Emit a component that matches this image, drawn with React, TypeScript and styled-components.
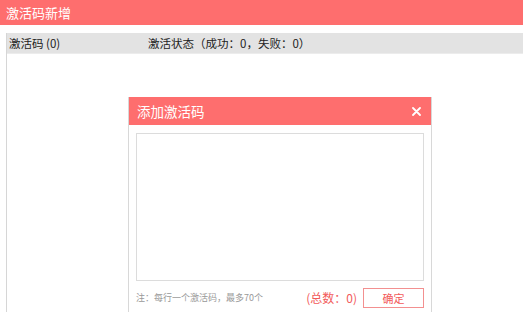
import styled, { createGlobalStyle } from 'styled-components';

const GlobalStyle = createGlobalStyle`
  html, body {
    margin: 0;
    padding: 0;
    background: #fff;
    font-family: "Noto Sans CJK SC", "Noto Sans", sans-serif;
  }
`;

const Page = styled.div`
  position: relative;
  width: 523px;
  height: 312px;
  overflow: hidden;
`;

const TopBar = styled.div`
  height: 25px;
  background: #fe6e6e;
  color: #fff;
  font-size: 13px;
  line-height: 25px;
  padding-left: 6px;
`;

const Table = styled.div`
  margin-top: 8px;
  margin-left: 6px;
  border-left: 1px solid #d6d6d6;
  height: 300px;
`;

const HeadRow = styled.div`
  display: flex;
  height: 20px;
  background: #e3e3e3;
  border-bottom: 1px solid #ececec;
  font-size: 11.5px;
  color: #222;
  line-height: 20px;
`;

const HeadCell = styled.div<{ $w?: number }>`
  width: ${(p) => (p.$w ? `${p.$w}px` : 'auto')};
  flex: ${(p) => (p.$w ? 'none' : '1')};
  padding-left: 2px;
  white-space: nowrap;
`;

const Modal = styled.div`
  position: absolute;
  left: 128px;
  top: 97px;
  width: 302px;
  height: 230px;
  background: #fff;
  border-left: 1px solid #d8d8d8;
  border-right: 1px solid #d8d8d8;
`;

const ModalHead = styled.div`
  display: flex;
  align-items: center;
  justify-content: space-between;
  height: 28px;
  background: #fe6e6e;
  color: #fff;
  padding: 0 10px 0 8px;
  font-size: 13.5px;
`;

const Close = styled.svg`
  display: block;
  width: 9px;
  height: 9px;
`;

const ModalBody = styled.div`
  padding: 8px 7px 0 7px;
`;

const Area = styled.div`
  height: 146px;
  border: 1px solid #dcdcdc;
`;

const Footer = styled.div`
  display: flex;
  align-items: center;
  margin-top: 7px;
  height: 19px;
`;

const Note = styled.span`
  flex: 1;
  font-size: 9px;
  color: #999;
`;

const Total = styled.span`
  font-size: 12px;
  color: #f25a5a;
  margin-right: 6px;
`;

const Button = styled.div`
  width: 59px;
  height: 18px;
  border: 1px solid #f39090;
  color: #f25a5a;
  font-size: 11px;
  line-height: 18px;
  text-align: center;
`;

export default function App() {
  return (
    <>
      <GlobalStyle />
      <Page>
        <TopBar>激活码新增</TopBar>
        <Table>
          <HeadRow>
            <HeadCell $w={137}>激活码 (0)</HeadCell>
            <HeadCell>激活状态（成功：0，失败：0）</HeadCell>
          </HeadRow>
        </Table>
        <Modal>
          <ModalHead>
            <span>添加激活码</span>
            <Close viewBox="0 0 9 9">
              <path d="M1 1L8 8M8 1L1 8" stroke="#fff" strokeWidth="1.8" strokeLinecap="round" />
            </Close>
          </ModalHead>
          <ModalBody>
            <Area />
            <Footer>
              <Note>注：每行一个激活码，最多70个</Note>
              <Total>(总数：0)</Total>
              <Button>确定</Button>
            </Footer>
          </ModalBody>
        </Modal>
      </Page>
    </>
  );
}
